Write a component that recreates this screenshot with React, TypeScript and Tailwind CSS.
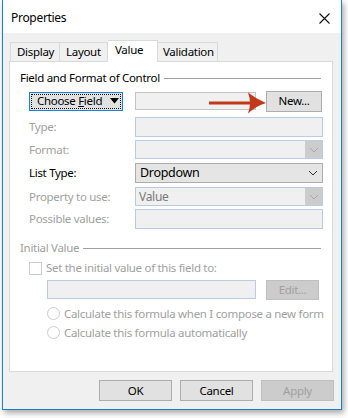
import React from "react";

const font = { fontFamily: '"Noto Sans", "Open Sans", sans-serif', letterSpacing: "-0.3px" };

function Chevron({ color = "#333" }: { color?: string }) {
  return (
    <svg width="10" height="6" viewBox="0 0 10 6">
      <path d="M1 1 L5 5 L9 1" fill="none" stroke={color} strokeWidth="1" />
    </svg>
  );
}

function Label({ children, disabled }: { children: React.ReactNode; disabled?: boolean }) {
  return (
    <div className={`w-[106px] shrink-0 ${disabled ? "text-[#a0a0a0]" : "text-black"}`}>
      {children}
    </div>
  );
}

function DisabledBox() {
  return <div className="w-[188px] h-[20px] border border-[#b8cde4] bg-[#f0f0f0]" />;
}

function DisabledSelect({ value }: { value?: string }) {
  return (
    <div className="w-[188px] h-[19px] border border-[#b8cde4] bg-[#f0f0f0] flex items-center">
      <span className="flex-1 pl-[3px] text-[#7a7a7a] text-[12px]">{value}</span>
      <div className="w-[17px] h-[17px] bg-[#cccccc] flex items-center justify-center">
        <Chevron color="#a8a8a8" />
      </div>
    </div>
  );
}

function Header({ text, disabled }: { text: string; disabled?: boolean }) {
  return (
    <div className="flex items-center h-[16px] pr-[11px]">
      <span className={disabled ? "text-[#a0a0a0]" : "text-black"}>{text}</span>
      <div className="flex-1 ml-[4px] h-px bg-[#a0a0a0]" />
    </div>
  );
}

function Radio({ label }: { label: string }) {
  return (
    <div className="flex items-center h-[19px] pl-[27px] gap-[4px] text-[#a0a0a0] whitespace-nowrap">
      <div className="w-[13px] h-[13px] shrink-0 rounded-full border border-[#cccccc] bg-white" />
      <span>{label}</span>
    </div>
  );
}

export default function App() {
  return (
    <div className="w-[348px] h-[418px] bg-white text-[11.5px] leading-none whitespace-nowrap" style={font}>
      <div className="relative ml-[2px] w-[340px] h-[410px] border border-t-0 border-[#1a7fd8] bg-[#f0f0f0] flex flex-col shadow-[2px_3px_6px_rgba(0,0,0,0.35)]">
        {/* title bar */}
        <div className="h-[33px] bg-white flex items-center justify-between pl-[8px] pr-[11px] pt-[3px]">
          <span className="text-[12px] text-black">Properties</span>
          <svg width="11" height="11" viewBox="0 0 11 11">
            <path d="M0.5 0.5 L10.5 10.5 M10.5 0.5 L0.5 10.5" stroke="#111" strokeWidth="1.1" />
          </svg>
        </div>

        {/* tabs */}
        <div className="pl-[7px] pt-[8px] flex items-end h-[28px] relative z-10">
          <div className="h-[19px] w-[50px] pl-[6px] flex items-center border border-b-0 border-[#d9d9d9] bg-[#f0f0f0]">Display</div>
          <div className="h-[19px] w-[48px] pl-[6px] flex items-center border border-b-0 border-l-0 border-[#d9d9d9] bg-[#f0f0f0]">Layout</div>
          <div className="w-[50px] pl-[7px] pb-[3px] flex items-center border border-b-0 border-l-0 border-[#d9d9d9] bg-white mb-[-1px] h-[22px]">Value</div>
          <div className="h-[19px] w-[60px] pl-[5px] flex items-center border border-b-0 border-l-0 border-[#d9d9d9] bg-[#f0f0f0]">Validation</div>
        </div>

        {/* panel */}
        <div className="relative ml-[6px] w-[324px] h-[311px] border border-[#d9d9d9] bg-white pl-[10px] pt-[8px]">
          <Header text="Field and Format of Control" />

          <div className="flex items-center mt-[5px] h-[20px]">
            <div className="ml-[9px] w-[94px] h-[19px] border border-[#1a7fd8] bg-[#e1e1e1] p-[1px]">
              <div className="h-full border border-dotted border-black flex items-center pl-[5px] gap-[8px]">
                <span>
                  Choose <span className="underline">F</span>ield
                </span>
                <svg width="9" height="6" viewBox="0 0 9 6">
                  <path d="M0 0 L9 0 L4.5 5.5 Z" fill="#000" />
                </svg>
              </div>
            </div>
            <div className="ml-[12px] w-[121px] h-[18px] border border-[#c4c4c4] bg-[#f0f0f0]" />
            <div className="ml-[10px] w-[56px] h-[21px] border border-[#adadad] bg-[#e1e1e1] flex items-center justify-center">
              New...
            </div>
          </div>

          <div className="flex items-center mt-[6px] h-[20px] pl-[9px]">
            <Label disabled>Type:</Label>
            <DisabledBox />
          </div>

          <div className="flex items-center mt-[3px] h-[19px] pl-[9px]">
            <Label disabled>Format:</Label>
            <DisabledSelect />
          </div>

          <div className="flex items-center mt-[4px] h-[20px] pl-[9px]">
            <Label>List Type:</Label>
            <div className="w-[188px] h-[20px] border border-[#adadad] bg-[#e5e5e5] flex items-center">
              <span className="flex-1 pl-[4px] text-[12.5px]">Dropdown</span>
              <div className="w-[18px] flex justify-center">
                <Chevron color="#333" />
              </div>
            </div>
          </div>

          <div className="flex items-center mt-[4px] h-[19px] pl-[9px]">
            <Label disabled>Property to use:</Label>
            <DisabledSelect value="Value" />
          </div>

          <div className="flex items-center mt-[3px] h-[20px] pl-[9px]">
            <Label disabled>Possible values:</Label>
            <DisabledBox />
          </div>

          <div className="mt-[11px]">
            <Header text="Initial Value" disabled />
          </div>

          <div className="flex items-center mt-[4px] h-[16px] pl-[9px] gap-[4px] text-[#a0a0a0]">
            <div className="w-[13px] h-[13px] shrink-0 border border-[#cccccc] bg-white" />
            <span>Set the initial value of this field to:</span>
          </div>

          <div className="flex items-center mt-[3px] h-[21px] pl-[27px]">
            <div className="w-[209px] h-[19px] border border-[#b8cde4] bg-[#f0f0f0]" />
            <div className="ml-[10px] w-[53px] h-[20px] border border-[#bfbfbf] bg-[#cccccc] text-[#a0a0a0] flex items-center justify-center">
              Edit...
            </div>
          </div>

          <div className="mt-[4px]">
            <Radio label="Calculate this formula when I compose a new form" />
            <Radio label="Calculate this formula automatically" />
          </div>

          {/* red annotation arrow */}
          <svg className="absolute left-[199px] top-[30px]" width="58" height="22" viewBox="0 0 58 22">
            <path d="M0 11 L42 11" stroke="#c0391b" strokeWidth="3" />
            <path d="M39 0.5 Q47 7 57 11 Q47 14 39 21.5 Q43 11 39 0.5 Z" fill="#c0391b" />
          </svg>
        </div>

        {/* bottom buttons */}
        <div className="flex justify-end gap-[8px] pr-[7px] mt-[8px]">
          <div className="w-[73px] h-[21px] border border-[#adadad] bg-[#e1e1e1] flex items-center justify-center">OK</div>
          <div className="w-[73px] h-[21px] border border-[#adadad] bg-[#e1e1e1] flex items-center justify-center">Cancel</div>
          <div className="w-[73px] h-[21px] border border-[#bfbfbf] bg-[#cccccc] text-[#a0a0a0] flex items-center justify-center">Apply</div>
        </div>
      </div>
    </div>
  );
}
